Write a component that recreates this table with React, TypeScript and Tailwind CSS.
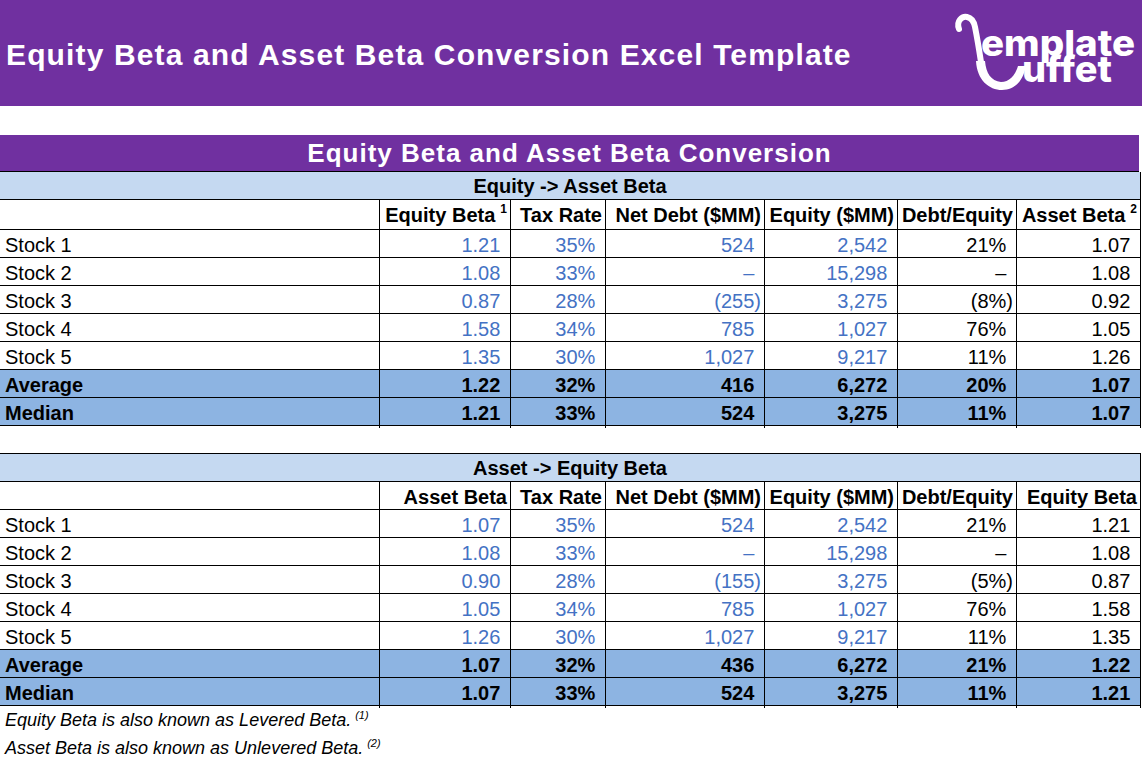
import React from "react";

const GRID = "grid grid-cols-[380px_131px_95px_159px_133px_119px_124px]";
const BLUE = "text-[#4472C4]";

type RowData = { label: string; vals: string[] };

const t1: RowData[] = [
  { label: "Stock 1", vals: ["1.21", "35%", "524", "2,542", "21%", "1.07"] },
  { label: "Stock 2", vals: ["1.08", "33%", "–", "15,298", "–", "1.08"] },
  { label: "Stock 3", vals: ["0.87", "28%", "(255)", "3,275", "(8%)", "0.92"] },
  { label: "Stock 4", vals: ["1.58", "34%", "785", "1,027", "76%", "1.05"] },
  { label: "Stock 5", vals: ["1.35", "30%", "1,027", "9,217", "11%", "1.26"] },
];
const t1s: RowData[] = [
  { label: "Average", vals: ["1.22", "32%", "416", "6,272", "20%", "1.07"] },
  { label: "Median", vals: ["1.21", "33%", "524", "3,275", "11%", "1.07"] },
];
const t2: RowData[] = [
  { label: "Stock 1", vals: ["1.07", "35%", "524", "2,542", "21%", "1.21"] },
  { label: "Stock 2", vals: ["1.08", "33%", "–", "15,298", "–", "1.08"] },
  { label: "Stock 3", vals: ["0.90", "28%", "(155)", "3,275", "(5%)", "0.87"] },
  { label: "Stock 4", vals: ["1.05", "34%", "785", "1,027", "76%", "1.58"] },
  { label: "Stock 5", vals: ["1.26", "30%", "1,027", "9,217", "11%", "1.35"] },
];
const t2s: RowData[] = [
  { label: "Average", vals: ["1.07", "32%", "436", "6,272", "21%", "1.22"] },
  { label: "Median", vals: ["1.07", "33%", "524", "3,275", "11%", "1.21"] },
];

function Num({ v }: { v: string }) {
  if (v.endsWith(")")) return <>{v}</>;
  return (
    <>
      {v}
      <span className="invisible">)</span>
    </>
  );
}

function DataRow({ r, summary }: { r: RowData; summary?: boolean }) {
  return (
    <div
      className={`${GRID} h-[28px] border-b border-black text-[20px] ${
        summary ? "bg-[#8DB4E2] font-bold text-black" : "bg-white text-black"
      }`}
    >
      <div className="flex items-center border-r border-black pl-[5px]">{r.label}</div>
      {r.vals.map((v, i) => (
        <div
          key={i}
          className={`flex items-center justify-end pr-[3px] border-r border-black ${
            !summary && i < 4 ? BLUE : ""
          }`}
        >
          <Num v={v} />
        </div>
      ))}
    </div>
  );
}

function HeaderRow({ first, last, tall }: { first: React.ReactNode; last: React.ReactNode; tall?: boolean }) {
  const heads = [first, "Tax Rate", "Net Debt ($MM)", "Equity ($MM)", "Debt/Equity", last];
  return (
    <div className={`${GRID} ${tall ? "h-[30px]" : "h-[28px]"} border-b border-black text-[20px] font-bold text-black`}>
      <div className="border-r border-black" />
      {heads.map((h, i) => (
        <div key={i} className="flex items-center justify-end pr-[3px] border-r border-black whitespace-nowrap">
          {h}
        </div>
      ))}
    </div>
  );
}

function Logo() {
  return (
    <svg width="188" height="90" viewBox="952 8 188 90" className="block">
      <path
        d="M959 29 C956 21 962 16 967 17 C972 18 974 22 975 27 C977 37 979 49 981 62"
        fill="none"
        stroke="white"
        strokeWidth="6"
        strokeLinecap="round"
      />
      <path
        d="M976 61 C977 80 989 90 1002 90 C1015 90 1023 81 1026 66 L1018 66 C1015 76 1009 82 1001 82 C991 81 986 73 985 61 Z"
        fill="white"
      />
      <text
        x="981"
        y="56"
        fill="white"
        fontFamily="Inter, 'Open Sans', sans-serif"
        fontWeight="800"
        fontSize="36"
        textLength="154"
        lengthAdjust="spacingAndGlyphs"
      >
        emplate
      </text>
      <text
        x="1022"
        y="82"
        fill="white"
        fontFamily="Inter, 'Open Sans', sans-serif"
        fontWeight="800"
        fontSize="36"
        textLength="90"
        lengthAdjust="spacingAndGlyphs"
      >
        uffet
      </text>
    </svg>
  );
}

export default function App() {
  return (
    <div className="w-[1142px] h-[764px] overflow-hidden bg-white font-['Liberation_Sans',Arial,sans-serif] text-black">
      <div className="h-[106px] bg-[#7030A0] flex items-center justify-between pr-[2px]">
        <div className="pl-[6px] pt-[3px] text-white font-bold text-[30px] tracking-[1.13px] whitespace-nowrap">
          Equity Beta and Asset Beta Conversion Excel Template
        </div>
        <Logo />
      </div>
      <div className="h-[29px]" />
      <div className="w-[1139px] h-[37px] bg-[#7030A0] border-b border-black flex items-center justify-center text-white font-bold text-[26px] tracking-[1px]">
        Equity Beta and Asset Beta Conversion
      </div>
      <div className="w-[1141px]">
        <div className="h-[28px] bg-[#C5D9F1] border-b border-r border-black flex items-center justify-center text-[20px] font-bold">
          Equity -&gt; Asset Beta
        </div>
        <HeaderRow
          tall
          first={
            <>
              Equity Beta<sup className="text-[12px] ml-[5px]">1</sup>
            </>
          }
          last={
            <>
              Asset Beta<sup className="text-[12px] ml-[5px]">2</sup>
            </>
          }
        />
        {t1.map((r) => (
          <DataRow key={r.label} r={r} />
        ))}
        {t1s.map((r) => (
          <DataRow key={r.label} r={r} summary />
        ))}
        <div className="h-[27px]" />
        <div className="h-[29px] bg-[#C5D9F1] border-t border-b border-r border-black flex items-center justify-center text-[20px] font-bold">
          Asset -&gt; Equity Beta
        </div>
        <HeaderRow first="Asset Beta" last="Equity Beta" />
        {t2.map((r) => (
          <DataRow key={r.label} r={r} />
        ))}
        {t2s.map((r) => (
          <DataRow key={r.label} r={r} summary />
        ))}
        <div className="h-[28px] flex items-center pl-[5px] italic text-[18px]">
          Equity Beta is also known as Levered Beta.<sup className="text-[11px] ml-[4px]">(1)</sup>
        </div>
        <div className="h-[28px] flex items-center pl-[5px] italic text-[18px]">
          Asset Beta is also known as Unlevered Beta.<sup className="text-[11px] ml-[4px]">(2)</sup>
        </div>
      </div>
    </div>
  );
}
